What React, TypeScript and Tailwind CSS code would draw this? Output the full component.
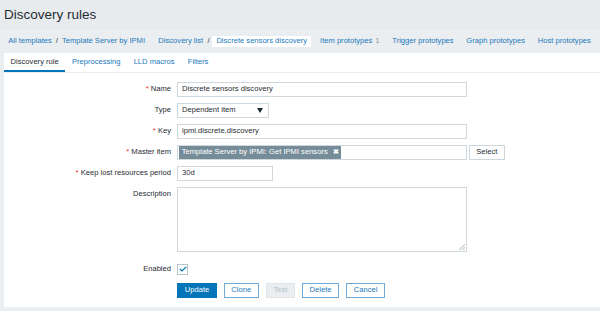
import React from "react";

const req = <span className="text-[#e33734]">*</span>;

function Label({ text, required, top }: { text: string; required?: boolean; top?: boolean }) {
  return (
    <div className={`w-[167px] pr-[0px] text-right text-[#1f2c33] ${top ? "pt-[3px]" : "flex items-center justify-end"}`}>
      <span>
        {required && <>{req} </>}
        {text}
      </span>
    </div>
  );
}

function Input({ value, w }: { value: string; w: string }) {
  return (
    <div className={`${w} h-[15px] border border-[#cfd8dc] bg-white px-[4px] flex items-center text-[#1f2c33]`}>
      {value}
    </div>
  );
}

export default function App() {
  const crumbs = ["Item prototypes", "Trigger prototypes", "Graph prototypes", "Host prototypes"];
  const tabs = ["Preprocessing", "LLD macros", "Filters"];

  return (
    <div className="w-[600px] h-[311px] overflow-hidden bg-[#ebeef0] font-['Liberation_Sans',Arial,sans-serif] text-[7.6px] leading-[8.7px]">
      {/* titulo */}
      <div className="h-[28px] bg-[#e8ebee] pl-[4px] pt-[7px]">
        <h1 className="text-[13.5px] leading-[16px] text-[#1f2c33]">Discovery rules</h1>
      </div>

      {/* breadcrumbs */}
      <div className="h-[24.7px] pt-[2px] pl-[8.3px] flex items-center text-[#1a78bb] border-t border-[#e3e7ea]">
        <span>All templates</span>
        <span className="mx-[4px] text-[#1f2c33]">/</span>
        <span>Template Server by IPMI</span>
        <span className="ml-[13.3px]">Discovery list</span>
        <span className="ml-[4.5px] mr-[2.4px] text-[#1f2c33]">/</span>
        <span className="bg-white px-[4.3px] h-[11px] flex items-center">Discrete sensors discovery</span>
        <span className="ml-[8.6px]">
          Item prototypes<span className="ml-[3px] text-[#8a9ba5]">1</span>
        </span>
        {crumbs.slice(1).map((c) => (
          <span key={c} className="ml-[12.7px]">{c}</span>
        ))}
      </div>

      {/* panel */}
      <div className="ml-[4px] h-[254px] bg-white">
        <div className="h-[20px] flex border-b border-[#ebeef0]">
          <div className="px-[6.6px] flex items-center pt-[2px] border-b-2 border-[#0275b8] text-[#1f2c33]">Discovery rule</div>
          {tabs.map((t) => (
            <div key={t} className="px-[6.6px] flex items-center pt-[0px] text-[#1a78bb]">{t}</div>
          ))}
        </div>

        <div className="pt-[9px] flex flex-col">
          <div className="flex gap-x-[6px]">
            <Label text="Name" required />
            <Input value="Discrete sensors discovery" w="w-[290px]" />
          </div>

          <div className="flex gap-x-[6px] mt-[6px]">
            <Label text="Type" />
            <div className="w-[92px] h-[15px] border border-[#cfd8dc] bg-white pl-[4px] pr-[5px] flex items-center justify-between text-[#1f2c33]">
              <span>Dependent item</span>
              <svg width="6" height="5" viewBox="0 0 6 5">
                <path d="M0 0 L6 0 L3 5 Z" fill="#1f2c33" />
              </svg>
            </div>
          </div>

          <div className="flex gap-x-[6px] mt-[6px]">
            <Label text="Key" required />
            <Input value="ipmi.discrete.discovery" w="w-[290px]" />
          </div>

          <div className="flex gap-x-[6px] mt-[6px]">
            <Label text="Master item" required />
            <div className="flex gap-x-[2px]">
              <div className="w-[290px] h-[15.5px] border border-[#cfd8dc] bg-white px-[1px] flex items-center">
                <div className="h-[12.5px] bg-[#768d99] text-white flex items-center pl-[2.7px] pr-[2px]">
                  <span>Template Server by IPMI: Get IPMI sensors</span>
                  <span className="ml-[5px] text-[7px] font-bold">✖</span>
                </div>
              </div>
              <div className="w-[35.5px] h-[15.5px] border border-[#cdd6da] bg-white flex items-center justify-center text-[#1f2c33]">
                Select
              </div>
            </div>
          </div>

          <div className="flex gap-x-[6px] mt-[6px]">
            <Label text="Keep lost resources period" required />
            <Input value="30d" w="w-[96px]" />
          </div>

          <div className="flex gap-x-[6px] mt-[6px]">
            <Label text="Description" top />
            <div className="relative w-[290px] h-[65px] border border-[#cfd8dc] bg-white">
              <svg className="absolute right-[1px] bottom-[1px]" width="7" height="7" viewBox="0 0 7 7">
                <path d="M1 7 L7 1 M3.5 7 L7 3.5 M5.5 7 L7 5.5" stroke="#9aa9b0" strokeWidth="0.8" />
              </svg>
            </div>
          </div>

          <div className="flex gap-x-[6px] mt-[11.5px] h-[11px]">
            <Label text="Enabled" />
            <div className="w-[11px] h-[11px] border border-[#b8c6cd] bg-white flex items-center justify-center">
              <svg width="8" height="6" viewBox="0 0 8 6">
                <path d="M0.8 2.8 L3 5 L7.2 0.8" stroke="#0275b8" strokeWidth="1.2" fill="none" />
              </svg>
            </div>
          </div>

          <div className="flex gap-x-[6.5px] mt-[8px] ml-[173px]">
            <button className="h-[15.5px] w-[40px] bg-[#0275b8] border border-[#0275b8] text-white">Update</button>
            <button className="h-[15.5px] w-[35.5px] bg-white border border-[#6fa9d6] text-[#1a78bb]">Clone</button>
            <button className="h-[15.5px] w-[29.7px] bg-[#ebeef0] border border-[#e0e5e8] text-[#b3c0c6]">Test</button>
            <button className="h-[15.5px] w-[37.7px] bg-white border border-[#6fa9d6] text-[#1a78bb]">Delete</button>
            <button className="h-[15.5px] w-[39.3px] bg-white border border-[#6fa9d6] text-[#1a78bb]">Cancel</button>
          </div>
        </div>
      </div>
    </div>
  );
}
